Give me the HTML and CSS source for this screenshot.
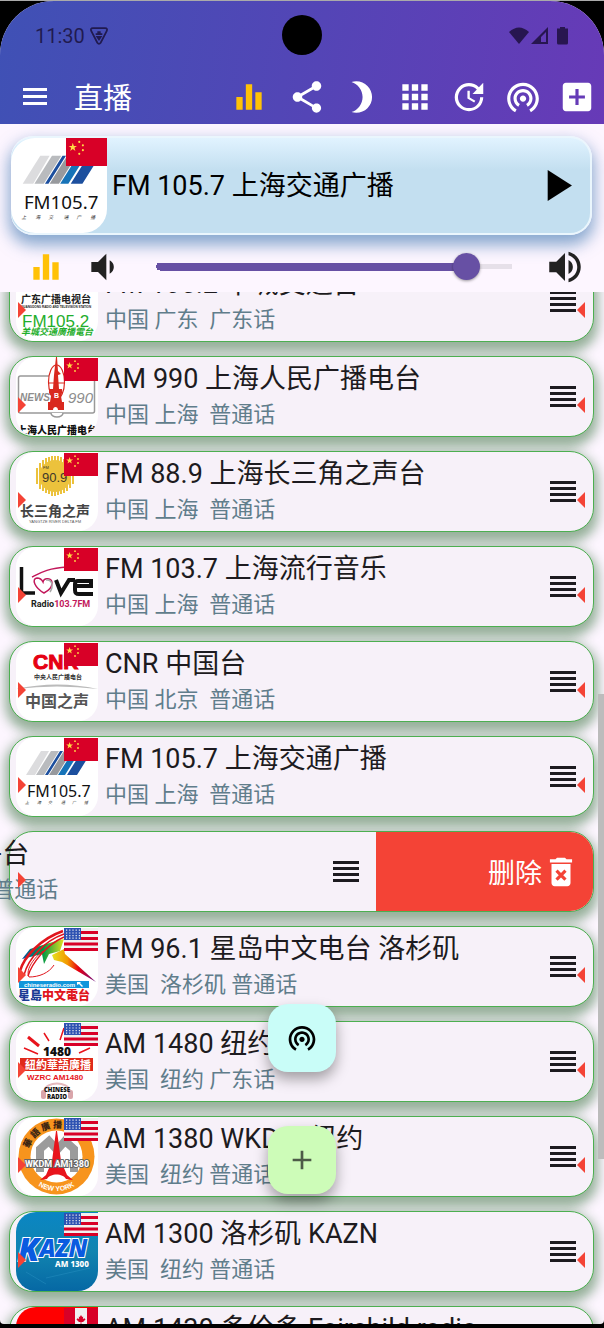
FILE: index.html
```html
<!DOCTYPE html>
<html lang="zh-CN">
<head>
    <meta charset="UTF-8">
    <meta name="viewport" content="width=device-width, initial-scale=1.0">
    <title>直播</title>
    <link rel="stylesheet" href="styles.css">
</head>
<body>
    <!-- 图标 -->
    <svg class="defs" aria-hidden="true">
        <symbol id="i-menu" viewBox="0 0 24 18"><path d="M0 0h24v3H0zM0 7h24v3H0zM0 14h24v3H0z"/></symbol>
        <symbol id="i-bars" viewBox="0 0 24 24"><path d="M10 20h4V4h-4v16zm-6 0h4v-8H4v8zM16 9v11h4V9h-4z"/></symbol>
        <symbol id="i-share" viewBox="0 0 24 24"><path d="M18 16.08c-.76 0-1.44.3-1.96.77L8.91 12.7c.05-.23.09-.46.09-.7s-.04-.47-.09-.7l7.05-4.11c.54.5 1.25.81 2.04.81 1.66 0 3-1.34 3-3s-1.34-3-3-3-3 1.34-3 3c0 .24.04.47.09.7L8.04 9.81C7.5 9.31 6.79 9 6 9c-1.66 0-3 1.34-3 3s1.34 3 3 3c.79 0 1.5-.31 2.04-.81l7.12 4.16c-.05.21-.08.43-.08.65 0 1.61 1.31 2.92 2.92 2.92s2.92-1.31 2.92-2.92-1.31-2.92-2.92-2.92z"/></symbol>
        <symbol id="i-moon" viewBox="0 0 24 24"><path d="M9 2c-1.05 0-2.05.16-3 .46 4.06 1.27 7 5.06 7 9.54 0 4.48-2.94 8.27-7 9.54.95.3 1.95.46 3 .46 5.52 0 10-4.48 10-10S14.52 2 9 2z"/></symbol>
        <symbol id="i-apps" viewBox="0 0 24 24"><path d="M4 8h4V4H4v4zm6 12h4v-4h-4v4zm-6 0h4v-4H4v4zm0-6h4v-4H4v4zm6 0h4v-4h-4v4zm6-10v4h4V4h-4zm-6 4h4V4h-4v4zm6 6h4v-4h-4v4zm0 6h4v-4h-4v4z"/></symbol>
        <symbol id="i-update" viewBox="0 0 24 24"><path d="M21 10.12h-6.78l2.74-2.82c-2.73-2.7-7.15-2.8-9.88-.1-2.73 2.71-2.73 7.08 0 9.79s7.15 2.71 9.88 0C18.32 15.65 19 14.08 19 12.1h2c0 1.98-.88 4.55-2.64 6.29-3.51 3.48-9.21 3.48-12.72 0-3.5-3.47-3.53-9.11-.02-12.58s9.14-3.47 12.65 0L21 3v7.12zM12.5 8v4.25l3.5 2.08-.72 1.21L11 13V8h1.5z"/></symbol>
        <symbol id="i-cast" viewBox="0 0 24 24"><path d="M12 11c-1.1 0-2 .9-2 2s.9 2 2 2 2-.9 2-2-.9-2-2-2zm6 2c0-3.31-2.69-6-6-6s-6 2.69-6 6c0 2.22 1.21 4.15 3 5.19l1-1.74c-1.19-.7-2-1.97-2-3.45 0-2.21 1.79-4 4-4s4 1.79 4 4c0 1.48-.81 2.75-2 3.45l1 1.74c1.79-1.04 3-2.97 3-5.19zM12 3C6.48 3 2 7.48 2 13c0 3.7 2.01 6.92 4.99 8.65l1-1.73C5.61 18.53 4 15.96 4 13c0-4.42 3.58-8 8-8s8 3.58 8 8c0 2.96-1.61 5.53-4 6.92l1 1.73c2.99-1.73 5-4.95 5-8.65 0-5.52-4.48-10-10-10z"/></symbol>
        <symbol id="i-addbox" viewBox="0 0 24 24"><path d="M19 3H5c-1.11 0-2 .9-2 2v14c0 1.1.89 2 2 2h14c1.1 0 2-.9 2-2V5c0-1.1-.9-2-2-2zm-2 10h-4v4h-2v-4H7v-2h4V7h2v4h4v2z"/></symbol>
        <symbol id="i-plus" viewBox="0 0 24 24"><path d="M19 13h-6v6h-2v-6H5v-2h6V5h2v6h6v2z"/></symbol>
        <symbol id="i-play" viewBox="0 0 24 24"><path d="M8 5v14l11-7z"/></symbol>
        <symbol id="i-vdown" viewBox="0 0 24 24"><path d="M18.5 12c0-1.77-1.02-3.29-2.5-4.03v8.05c1.48-.73 2.5-2.25 2.5-4.02zM5 9v6h4l5 5V4L9 9H5z"/></symbol>
        <symbol id="i-vup" viewBox="0 0 24 24"><path d="M3 9v6h4l5 5V4L7 9H3zm13.5 3c0-1.77-1.02-3.29-2.5-4.03v8.05c1.48-.73 2.5-2.25 2.5-4.02zM14 3.23v2.06c2.89.86 5 3.54 5 6.71s-2.11 5.85-5 6.71v2.06c4.01-.91 7-4.49 7-8.77s-2.99-7.86-7-8.77z"/></symbol>
        <symbol id="i-drag" viewBox="0 0 26 21"><path d="M0 0h26v3H0zM0 6h26v3H0zM0 12h26v3H0zM0 18h26v3H0z"/></symbol>
        <symbol id="i-trash" viewBox="0 0 24 24"><path d="M6 19c0 1.1.9 2 2 2h8c1.1 0 2-.9 2-2V7H6v12zm2.46-7.12l1.41-1.41L12 12.59l2.12-2.12 1.41 1.41L13.41 14l2.12 2.12-1.41 1.41L12 15.41l-2.12 2.12-1.41-1.41L10.59 14l-2.13-2.12zM15.5 4l-1-1h-5l-1 1H5v2h14V4z"/></symbol>

        <!-- 国旗 -->
        <symbol id="f-cn" viewBox="0 0 34 23" preserveAspectRatio="none">
            <path fill="#d80027" d="M0 0h34v23H0z"/>
            <g fill="#ffda44">
                <path d="M5.600 4l.9 2.500h2.600l-2.100 1.600.8 2.500-2.200-1.500-2.100 1.500.8-2.500L2.200 6.500h2.600z"/>
                <circle cx="11" cy="3.200" r=".9"/><circle cx="14" cy="6" r=".9"/><circle cx="14" cy="10" r=".9"/><circle cx="11" cy="13" r=".9"/>
            </g>
        </symbol>
        <symbol id="f-us" viewBox="0 0 34 23" preserveAspectRatio="none">
            <path fill="#f0f0f0" d="M0 0h34v23H0z"/>
            <path fill="#d80027" d="M0 3h34v3H0zM0 9h34v3H0zM0 14.500h34v3H0zM0 20h34v3H0z"/>
            <path fill="#2e52b2" d="M0 0h17v12H0z"/>
            <path stroke="#f0f0f0" stroke-width="1.200" stroke-dasharray="1.200 2" d="M2 2.200h14M2 5h14M2 7.600h14M2 10.200h14"/>
        </symbol>
        <symbol id="f-ca" viewBox="0 0 34 23" preserveAspectRatio="none">
            <path fill="#f0f0f0" d="M0 0h34v23H0z"/>
            <path fill="#d80027" d="M0 0h11v23H0zM23 0h11v23H23zM17 7l1.200 2 1-.5-.3 2.500 1.600-.8 1 1.300-2.500 2.500h-1.600v2.500h-.8V14H15l-2.500-2.500 1-1.300 1.600.8-.3-2.500 1 .5z"/>
        </symbol>
        <symbol id="stripes" viewBox="0 0 82 79">
            <path fill="#dcdcde" d="M10 38L25 14h8L19 38z"/>
            <path fill="#b9bbbe" d="M20 38l15-24h8L28 38z"/>
            <path fill="#1c4f9e" d="M29 38l15-24h3L32 38zM51 38l15-24h10L61 38z"/>
            <path fill="#97999d" d="M33 38l15-24h8L41 38z"/>
            <path fill="#1673b8" d="M42 38l15-24h7L49 38z"/>
        </symbol>
    </svg>

    <div class="screen">
        <header class="head">
            <div class="status">
                <span class="time">11:30</span>
                <svg class="vpn" viewBox="0 0 18 16"><path d="M3.500 1h11q2.500 0 1.500 2.500L10.500 14q-1.500 2-3 0L2 3.500Q1 1 3.500 1z" fill="none" stroke="currentColor" stroke-width="1.600"/><path d="M6 5.500h6V7H6zM6 8h6l-3 4.500zM7.500 3.800h3v2h-3z" fill="currentColor"/></svg>
                <span class="camera"></span>
                <svg class="signal" viewBox="0 0 60 18">
                    <path d="M0 5Q10-4 20 5L10 17z"/>
                    <path fill-rule="evenodd" d="M22 17L39 0v17zM32 15h5V5l-5 5z"/>
                    <path d="M51 0h5v1.500h3V16q0 1.500-1.500 1.500h-8Q48 17.500 48 16V1.500h3z"/>
                </svg>
            </div>
            <div class="toolbar">
                <button class="menu-btn" aria-label="菜单"><svg><use href="#i-menu"/></svg></button>
                <h1>直播</h1>
                <button class="tool wide" aria-label="播放状态"><svg><use href="#i-bars"/></svg></button>
                <button class="tool" aria-label="分享"><svg><use href="#i-share"/></svg></button>
                <button class="tool" aria-label="夜间模式"><svg><use href="#i-moon"/></svg></button>
                <button class="tool" aria-label="网格"><svg><use href="#i-apps"/></svg></button>
                <button class="tool" aria-label="定时"><svg><use href="#i-update"/></svg></button>
                <button class="tool" aria-label="电台"><svg><use href="#i-cast"/></svg></button>
                <button class="tool" aria-label="添加"><svg><use href="#i-addbox"/></svg></button>
            </div>
        </header>

        <section class="player">
            <div class="now">
                <div class="logo">
                    <svg class="pic" viewBox="0 0 82 79">
                        <use href="#stripes" width="82" height="79"/>
                        <text class="t-noto" x="11" y="60" font-size="16" fill="#111">FM105.7</text>
                        <text class="t-cjk" x="9 21 32 45 56 68" y="68" font-size="4" font-style="italic" fill="#333">上海交通广播</text>
                    </svg>
                    <svg class="flag"><use href="#f-cn"/></svg>
                </div>
                <span class="name">FM 105.7 上海交通广播</span>
                <button class="play-btn" aria-label="播放"><svg><use href="#i-play"/></svg></button>
            </div>
            <div class="volume">
                <svg class="bars"><use href="#i-bars"/></svg>
                <svg class="vol-down"><use href="#i-vdown"/></svg>
                <input type="range" min="0" max="100" value="87" aria-label="音量">
                <svg class="vol-up"><use href="#i-vup"/></svg>
            </div>
        </section>

        <main class="list-wrap">
            <ul class="list">
                <li class="row">
                    <div class="item">
                        <div class="logo">
                            <svg class="pic" viewBox="0 0 82 79">
                                <text class="t-cjk" x="5" y="41" font-size="10" font-weight="700" fill="#222">广东广播电视台</text>
                                <text class="t-sans" x="5" y="46" font-size="3" font-weight="700" fill="#222">GUANGDONG RADIO AND TELEVISION STATION</text>
                                <text class="t-sans" x="6" y="65" font-size="17" fill="#1fae2c">FM105.2</text>
                                <text class="t-cjk" x="5" y="73" font-size="9" font-weight="700" font-style="italic" fill="#1fae2c">羊城交通廣播電台</text>
                            </svg>
                            <svg class="flag"><use href="#f-cn"/></svg>
                        </div>
                        <div class="info"><span class="name">FM 105.2 羊城交通台</span><span class="meta">中国 广东  广东话</span></div>
                        <svg class="drag"><use href="#i-drag"/></svg>
                    </div>
                </li>
                <li class="row">
                    <div class="item">
                        <div class="logo">
                            <svg class="pic" viewBox="0 0 82 79">
                                <rect x="2.500" y="19" width="76" height="37" rx="2" fill="#fff" stroke="#999" stroke-width="1.500"/>
                                <path d="M35 56a6 4 0 0 0 12 0" fill="#fff" stroke="#999" stroke-width="1.500"/>
                                <text class="t-sans" x="4" y="44" font-size="10" font-weight="700" font-style="italic" fill="#8d8d8d">NEWS</text>
                                <text class="t-sans" x="52" y="46" font-size="15" font-style="italic" fill="#8d8d8d">990</text>
                                <ellipse cx="40.500" cy="25" rx="8" ry="17" fill="#fff" stroke="#d9281e" stroke-width="1.200"/>
                                <path d="M32 26h17" fill="none" stroke="#d9281e" stroke-width="1.200"/>
                                <path fill="#d9281e" d="M40 0h1l1 14 3 3-3 1 1 14h3v4l-1 3 1 6h2v8h-6c0-4-5-4-5 0h-5v-8h2l1-6-2-3v-4h4l1-14z"/>
                                <text class="t-sans" x="38" y="41" font-size="7" font-weight="700" fill="#fff">B</text>
                                <text class="t-cjk" x="1" y="77" font-size="10" font-weight="900" fill="#111">上海人民广播电台</text>
                            </svg>
                            <svg class="flag"><use href="#f-cn"/></svg>
                        </div>
                        <div class="info"><span class="name">AM 990 上海人民广播电台</span><span class="meta">中国 上海  普通话</span></div>
                        <svg class="drag"><use href="#i-drag"/></svg>
                    </div>
                </li>
                <li class="row">
                    <div class="item">
                        <div class="logo">
                            <svg class="pic" viewBox="0 0 82 79">
                                <circle cx="39" cy="24" r="16" fill="#ecc23c"/>
                                <path d="M21 16v16M24 11v26M27 8v31M30 6v35M33 5v37M36 4v40M39 4v40M42 4v39M45 5v37M48 7v34M51 9v30M54 12v24M57 16v16" stroke="#ecc23c" stroke-width="2"/>
                                <text class="t-sans" x="27" y="17" font-size="4" fill="#333">FM</text>
                                <text class="t-sans" x="26" y="30" font-size="13" fill="#40382a">90.9</text>
                                <text class="t-cjk" x="4" y="64" font-size="14" font-weight="700" fill="#444">长三角之声</text>
                                <text class="t-sans" x="13" y="71" font-size="4" fill="#555">YANGTZE RIVER DELTA FM</text>
                            </svg>
                            <svg class="flag"><use href="#f-cn"/></svg>
                        </div>
                        <div class="info"><span class="name">FM 88.9 上海长三角之声台</span><span class="meta">中国 上海  普通话</span></div>
                        <svg class="drag"><use href="#i-drag"/></svg>
                    </div>
                </li>
                <li class="row">
                    <div class="item">
                        <div class="logo">
                            <svg class="pic" viewBox="0 0 82 79">
                                <path d="M5.500 20v26H19" fill="none" stroke="#111" stroke-width="3.500"/>
                                <path d="M16 30c8-4 16-9 35-10" fill="none" stroke="#c2185b" stroke-width="1.500"/>
                                <path d="M28 46c-9-5-13-14-7-15 3 0 5 2 6 4 1-5 9-4 9 1 0 4-4 8-8 10z" fill="#fff" stroke="#c2185b" stroke-width="1.500"/>
                                <path d="M30 33c6-1 8 6 4 12" fill="none" stroke="#aaa" stroke-width="1.500"/>
                                <path d="M40 33l5 13 8-13h6M61 39h14v-5H62c-2 0-3 1-3 3v6c0 3 1 4 4 4h14" fill="none" stroke="#111" stroke-width="4"/>
                                <text class="t-roboto" x="15" y="60" font-size="9" font-weight="700" fill="#222">Radio<tspan fill="#c2185b">103.7FM</tspan></text>
                            </svg>
                            <svg class="flag"><use href="#f-cn"/></svg>
                        </div>
                        <div class="info"><span class="name">FM 103.7 上海流行音乐</span><span class="meta">中国 上海  普通话</span></div>
                        <svg class="drag"><use href="#i-drag"/></svg>
                    </div>
                </li>
                <li class="row">
                    <div class="item">
                        <div class="logo">
                            <svg class="pic" viewBox="0 0 82 79">
                                <text class="t-sans" x="17" y="27" font-size="21" font-weight="900" fill="#e60012" stroke="#e60012">CNR</text>
                                <text class="t-cjk" x="18" y="37" font-size="6" font-weight="700" fill="#333">中央人民广播电台</text>
                                <path fill="#bbb" d="M0 47q41-9 82 0q-41-5-82 0z"/>
                                <text class="t-cjk" x="9" y="65" font-size="16" font-weight="700" fill="#555">中国之声</text>
                            </svg>
                            <svg class="flag"><use href="#f-cn"/></svg>
                        </div>
                        <div class="info"><span class="name">CNR 中国台</span><span class="meta">中国 北京  普通话</span></div>
                        <svg class="drag"><use href="#i-drag"/></svg>
                    </div>
                </li>
                <li class="row">
                    <div class="item">
                        <div class="logo">
                            <svg class="pic" viewBox="0 0 82 79">
                                <use href="#stripes" width="82" height="79"/>
                                <text class="t-noto" x="11" y="60" font-size="16" fill="#111">FM105.7</text>
                                <text class="t-cjk" x="9 21 32 45 56 68" y="67" font-size="4" font-style="italic" fill="#333">上海交通广播</text>
                            </svg>
                            <svg class="flag"><use href="#f-cn"/></svg>
                        </div>
                        <div class="info"><span class="name">FM 105.7 上海交通广播</span><span class="meta">中国 上海  普通话</span></div>
                        <svg class="drag"><use href="#i-drag"/></svg>
                    </div>
                </li>
                <!-- 左滑后的行 -->
                <li class="row swiped">
                    <div class="item">
                        <div class="logo"></div>
                        <div class="info"><span class="name">CNR 中平台</span><span class="meta">中国 北京  普通话</span></div>
                        <svg class="drag"><use href="#i-drag"/></svg>
                    </div>
                    <button class="delete-btn">删除<svg><use href="#i-trash"/></svg></button>
                </li>
                <li class="row">
                    <div class="item">
                        <div class="logo">
                            <svg class="pic" viewBox="0 0 82 79">
                                <defs>
                                    <linearGradient id="leg"><stop offset="0" stop-color="#e5e020"/><stop offset=".35" stop-color="#f39800"/><stop offset=".6" stop-color="#e60012"/><stop offset="1" stop-color="#6a0e83"/></linearGradient>
                                    <linearGradient id="arm"><stop offset="0" stop-color="#0a4ea2"/><stop offset=".5" stop-color="#009944"/><stop offset="1" stop-color="#e5e020"/></linearGradient>
                                </defs>
                                <path fill="url(#arm)" d="M6 32l8-10 26-8 8-2-4 12-11 3-5 10-2-10z"/>
                                <path fill="url(#leg)" d="M36 28l12-6 1 5 31 28-34-20-8-2z"/>
                                <g fill="none" stroke="#e0161d">
                                    <path stroke-width="2.500" d="M4 44C8 30 24 12 47 4"/>
                                    <path stroke-width="1.500" d="M8 48C12 32 28 14 48 7"/>
                                    <path stroke-width="1.500" d="M12 49C16 36 30 18 48 10"/>
                                    <path d="M13 50c10 0 20-4 25-12M13 50c-4-8 6-20 14-26"/>
                                </g>
                                <rect x="3" y="54" width="70" height="7" fill="#1296db"/>
                                <text class="t-sans" x="8" y="60" font-size="6" font-weight="700" fill="#fff">chineseradio.com</text>
                                <path fill="#fff" d="M61 55h4l-1 1 3 3-1 1-3-3-2 1z"/>
                                <text class="t-cjk" x="2" y="73" font-size="12" font-weight="900" fill="#1d3a94">星島<tspan fill="#e0161d">中文電台</tspan></text>
                            </svg>
                            <svg class="flag"><use href="#f-us"/></svg>
                        </div>
                        <div class="info"><span class="name">FM 96.1 星岛中文电台 洛杉矶</span><span class="meta">美国  洛杉矶 普通话</span></div>
                        <svg class="drag"><use href="#i-drag"/></svg>
                    </div>
                </li>
                <li class="row">
                    <div class="item">
                        <div class="logo">
                            <svg class="pic" viewBox="0 0 82 79">
                                <g stroke="#e8141c">
                                    <path stroke-width="3" d="M12 15l11 9"/>
                                    <path stroke-width="1.500" d="M28 11l5 8M44 18l4-12M8 26l14 6M63 31l11-5"/>
                                </g>
                                <text class="t-noto" x="27" y="34" font-size="12" font-weight="900" fill="#111">1480</text>
                                <rect x="4" y="36" width="73" height="13" fill="#e02a1b"/>
                                <text class="t-cjk" x="9" y="47" font-size="11" font-weight="700" fill="#fff">紐約華語廣播</text>
                                <text class="t-sans" x="11" y="58" font-size="8" font-weight="700" fill="#e8141c">WZRC AM1480</text>
                                <path d="M28 75v-6c2-10 24-10 26 0v6" fill="none" stroke="#e5b9bd" stroke-width="2"/>
                                <rect x="25" y="68" width="5" height="9" rx="2" fill="#d9a5aa"/><rect x="52" y="68" width="5" height="9" rx="2" fill="#d9a5aa"/>
                                <text class="t-noto" x="41" y="70" font-size="6" font-weight="900" text-anchor="middle" fill="#111">CHINESE</text>
                                <text class="t-noto" x="41" y="77" font-size="6" font-weight="900" text-anchor="middle" fill="#111">RADIO</text>
                            </svg>
                            <svg class="flag"><use href="#f-us"/></svg>
                        </div>
                        <div class="info"><span class="name">AM 1480 纽约</span><span class="meta">美国  纽约 广东话</span></div>
                        <svg class="drag"><use href="#i-drag"/></svg>
                    </div>
                </li>
                <li class="row">
                    <div class="item">
                        <div class="logo">
                            <svg class="pic" viewBox="0 0 82 79">
                                <circle cx="40.500" cy="39.500" r="38" fill="#f7941d"/>
                                <circle cx="40.500" cy="39.500" r="26" fill="#fff"/>
                                <path d="M24 55V32l9-8 8 9 8-9 9 8v23" fill="none" stroke="#9b9b9b" stroke-width="8"/>
                                <path fill="#e8141c" d="M40 14h1l4 30 6 14 6 5-7-1c-3-6-16-6-19 0l-7 1 6-5 6-14z"/>
                                <path id="arc1" d="M12 39.500a28.500 28.500 0 0 1 57 0" fill="none"/>
                                <path id="arc2" d="M6 39.500a34.500 34.500 0 0 0 69 0" fill="none"/>
                                <text class="t-cjk" font-size="9" font-weight="900" fill="#3b2414"><textPath href="#arc1" startOffset="8">華 語 廣 播 電 台</textPath></text>
                                <text class="t-sans" font-size="7" font-weight="700" fill="#fff" text-anchor="middle"><textPath href="#arc2" startOffset="50%">NEW YORK</textPath></text>
                                <text class="t-roboto outline" x="41" y="50" font-size="9" font-weight="700" text-anchor="middle" fill="#fff" stroke="#666">WKDM AM1380</text>
                            </svg>
                            <svg class="flag"><use href="#f-us"/></svg>
                        </div>
                        <div class="info"><span class="name">AM 1380 WKDM 纽约</span><span class="meta">美国  纽约 普通话</span></div>
                        <svg class="drag"><use href="#i-drag"/></svg>
                    </div>
                </li>
                <li class="row">
                    <div class="item">
                        <div class="logo">
                            <svg class="pic" viewBox="0 0 82 79" preserveAspectRatio="none">
                                <linearGradient id="sea" x2="0" y2="1"><stop offset="0" stop-color="#0a86c4"/><stop offset=".5" stop-color="#1184b0"/><stop offset="1" stop-color="#0668a4"/></linearGradient>
                                <path fill="url(#sea)" d="M0 0h82v79H0z"/>
                                <path stroke="#3ba3cf" stroke-opacity=".3" d="M44 14l30 12M30 66l44-10M10 60l20 12"/>
                                <text class="t-noto outline" y="49" font-weight="900" font-style="italic" fill="#0a5be0" stroke="#fff"><tspan x="2" font-size="32">K</tspan><tspan y="45" font-size="24">AZN</tspan></text>
                                <text class="t-noto" x="39" y="55" font-size="8" font-weight="800" fill="#fff">AM 1300</text>
                            </svg>
                            <svg class="flag"><use href="#f-us"/></svg>
                        </div>
                        <div class="info"><span class="name">AM 1300 洛杉矶 KAZN</span><span class="meta">美国  纽约 普通话</span></div>
                        <svg class="drag"><use href="#i-drag"/></svg>
                    </div>
                </li>
                <li class="row">
                    <div class="item">
                        <div class="logo red"><svg class="flag"><use href="#f-ca"/></svg></div>
                        <div class="info"><span class="name">AM 1430 多伦多 Fairchild radio</span><span class="meta">加拿大  多伦多 广东话</span></div>
                        <svg class="drag"><use href="#i-drag"/></svg>
                    </div>
                </li>
            </ul>
            <div class="scroll-thumb"></div>
        </main>

        <div class="fabs">
            <button class="fab cast" aria-label="电台"><svg><use href="#i-cast"/></svg></button>
            <button class="fab add" aria-label="添加"><svg><use href="#i-plus"/></svg></button>
        </div>
    </div>
</body>
</html>
```

FILE: styles.css
```css
* {
    margin: 0;
    padding: 0;
    box-sizing: border-box;
}

body {
    font-family: Roboto, "Noto Sans CJK SC", sans-serif;
    background-color: #000;
    color: #1d1b20;
    height: 100vh;
    border-top: 1px solid #aaa;
    border-bottom: 4px solid #000;
    overflow: hidden;
}

button {
    border: none;
    background: none;
    font: inherit;
    color: inherit;
    display: flex;
    align-items: center;
    justify-content: center;
    cursor: pointer;
}

svg {
    display: block;
    fill: currentColor;
}

.defs {
    position: absolute;
    width: 0;
    height: 0;
}

.screen {
    position: relative;
    height: 100%;
    display: flex;
    flex-direction: column;
    border-radius: 54px 54px 4px 4px;
    background-color: #fdf6ff;
    overflow: hidden;
}

/* 顶部 */
.head {
    background: linear-gradient(100deg, #3f51b5, #673ab7);
    color: #fff;
}

.status {
    position: relative;
    height: 69px;
    padding: 0 35px;
    display: flex;
    align-items: center;
    color: rgba(20, 10, 45, 0.75);
}

.time {
    font-size: 20px;
}

.vpn {
    width: 20px;
    height: 18px;
    margin-left: 4px;
}

.signal {
    width: 60px;
    height: 18px;
    margin-left: auto;
}

.camera {
    position: absolute;
    left: 50%;
    top: 14px;
    width: 40px;
    height: 40px;
    margin-left: -20px;
    border-radius: 50%;
    background-color: #000;
}

.toolbar {
    height: 54px;
    display: flex;
    align-items: center;
}

.menu-btn {
    width: 70px;
    height: 54px;
}

.menu-btn svg {
    width: 24px;
    height: 18px;
}

.toolbar h1 {
    flex: 1;
    padding: 5px 0 0 4px;
    font-size: 29px;
    font-weight: 400;
    line-height: 49px;
}

.tool {
    width: 54px;
    height: 54px;
}

.tool.wide {
    width: 62px;
    color: #ffc107;
}

.tool svg {
    width: 38px;
    height: 38px;
}

/* 播放器 */
.player {
    position: relative;
    z-index: 2;
    padding: 12px 12px 0 11px;
    background-color: #fdf6ff;
}

.now {
    height: 99px;
    display: flex;
    align-items: center;
    border: 2px solid #eaf6fd;
    border-left-width: 0;
    border-radius: 22px;
    background: linear-gradient(#e1f3ff, #c3dff0 32px);
    box-shadow: 0 8px 16px 2px rgba(70, 125, 180, 0.65);
    color: #000;
}

.now .logo {
    width: 96px;
    height: 95px;
    margin: 0 5px 0 0;
    border-radius: 24px 0 24px 24px;
}

.now .flag {
    width: 41px;
    height: 28px;
    top: 0;
}

.now .name {
    flex: 1;
}

.play-btn {
    width: 53px;
    height: 53px;
    margin-right: 7px;
}

.play-btn svg {
    width: 53px;
    height: 53px;
}

.volume {
    height: 57px;
    padding: 6px 0 0 16px;
    display: flex;
    align-items: center;
    color: #222;
}

.volume svg {
    flex: none;
    width: 38px;
    height: 38px;
}

.volume .bars {
    color: #ffc107;
}

.volume .vol-down {
    width: 40px;
    height: 40px;
    margin: 0 20px 0 18px;
}

.volume .vol-up {
    width: 42px;
    height: 42px;
    margin: 0 6px 0 18px;
}

.volume input {
    flex: 1;
    min-width: 0;
    height: 27px;
    -webkit-appearance: none;
    appearance: none;
    background: transparent;
}

.volume input::-webkit-slider-runnable-track {
    height: 27px;
    background:
        radial-gradient(circle at 17px 50%, #6750a4 4px, transparent 4px),
        linear-gradient(#6750a4, #6750a4) 17px 50% / calc(87% - 20px) 8px no-repeat,
        linear-gradient(#e6e0e9, #e6e0e9) 17px 50% / calc(100% - 31px) 5px no-repeat;
}

.volume input::-webkit-slider-thumb {
    -webkit-appearance: none;
    width: 27px;
    height: 27px;
    border-radius: 50%;
    background-color: #6750a4;
    box-shadow: 0 1px 3px rgba(0, 0, 0, 0.4);
}

/* 电台列表 */
.list-wrap {
    position: relative;
    flex: 1;
    min-height: 0;
    overflow: hidden;
}

.list {
    list-style: none;
    margin-top: -31px;
    padding: 0 10px 0 9px;
    display: flex;
    flex-direction: column;
    gap: 14px;
}

.row {
    position: relative;
    height: 81px;
    display: flex;
    border: 1px solid #4caf50;
    border-radius: 24px;
    background-color: #f7f1f9;
    box-shadow: 0 6px 12px 4px rgba(27, 94, 32, 0.46);
}

.row::before,
.row::after {
    content: "";
    position: absolute;
    z-index: 1;
    top: 40px;
    border: 8px solid transparent;
}

.row::before {
    left: 8px;
    border-left-color: #f44336;
    border-right-width: 0;
}

.row::after {
    right: 8px;
    border-right-color: #f44336;
    border-left-width: 0;
}

.item {
    flex: 0 0 100%;
    display: flex;
    align-items: center;
    padding: 0 17px 0 6px;
}

.logo {
    position: relative;
    width: 82px;
    height: 79px;
    margin-right: 7px;
    border-radius: 20px 0 20px 20px;
    background-color: #fff;
    overflow: hidden;
}

.logo.red {
    background-color: #f00;
}

.pic {
    width: 100%;
    height: 100%;
}

.flag {
    position: absolute;
    top: 1px;
    right: 0;
    width: 34px;
    height: 23px;
}

.info {
    flex: 1;
    display: flex;
    flex-direction: column;
    padding-bottom: 2px;
}

.name {
    font-size: 27px;
    line-height: 38px;
    white-space: pre;
}

.meta {
    font-size: 22px;
    line-height: 34px;
    color: #607d8b;
    white-space: pre;
}

.drag {
    width: 26px;
    height: 21px;
    color: #1d1b20;
}

.swiped::after {
    display: none;
}

.swiped .item {
    margin-left: -217px;
}

.swiped .logo {
    background: none;
}

.delete-btn {
    flex: 0 0 217px;
    justify-content: flex-end;
    padding-right: 13px;
    border-radius: 0 23px 23px 0;
    background-color: #f44336;
    color: #fff;
    font-size: 27px;
}

.delete-btn svg {
    width: 38px;
    height: 38px;
}

.scroll-thumb {
    position: absolute;
    right: 0;
    top: 39%;
    height: 45%;
    width: 6px;
    background-color: #bcbcbc;
}

/* 悬浮按钮 */
.fabs {
    position: absolute;
    left: 50%;
    bottom: 130px;
    z-index: 3;
    margin-left: -34px;
    display: flex;
    flex-direction: column;
    gap: 54px;
}

.fab {
    width: 68px;
    height: 68px;
    border-radius: 20px;
    box-shadow: 0 7px 14px rgba(0, 0, 0, 0.35);
}

.fab svg {
    width: 32px;
    height: 32px;
}

.fab.cast {
    background-color: #c9fdf8;
    color: #000;
}

.fab.add {
    background-color: #cdfcb8;
    color: #4d5b47;
}

/* 标志里的文字 */
.t-sans {
    font-family: "Liberation Sans", sans-serif;
}

.t-noto {
    font-family: "Noto Sans", sans-serif;
}

.t-roboto {
    font-family: Roboto, sans-serif;
}

.t-cjk {
    font-family: "Noto Sans CJK SC", sans-serif;
}

.outline {
    paint-order: stroke;
    stroke-width: 2px;
}
```
